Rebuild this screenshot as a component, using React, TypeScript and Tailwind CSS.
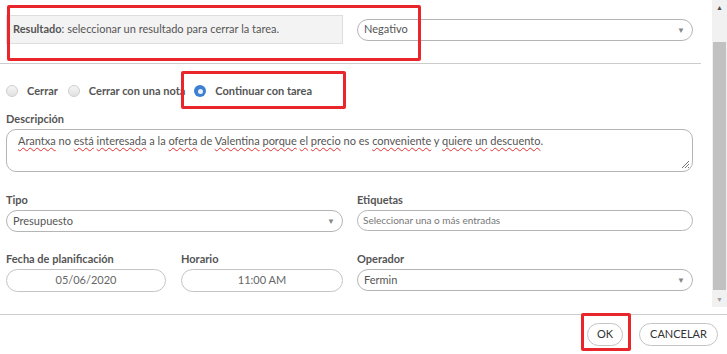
import React from 'react';

const Chevron = () => (
  <span className="absolute right-[7px] top-1/2 -translate-y-1/2 text-[8px] leading-none text-[#888]">▼</span>
);

const Radio = ({ checked = false }: { checked?: boolean }) =>
  checked ? (
    <span className="w-[12px] h-[12px] rounded-full bg-[#3d7fd1] flex items-center justify-center shrink-0">
      <span className="w-[5px] h-[5px] rounded-full bg-[#e8f0fb]" />
    </span>
  ) : (
    <span className="w-[12px] h-[12px] rounded-full border border-[#cfcfcf] bg-gradient-to-b from-[#f5f5f5] to-[#e2e2e2] shrink-0" />
  );

const Label = ({ children }: { children: React.ReactNode }) => (
  <div className="text-[11px] leading-[14px] font-bold text-[#555] mb-[3px]">{children}</div>
);

const Sp = ({ children }: { children: React.ReactNode }) => (
  <span className="underline decoration-wavy decoration-[#e03030] decoration-[1px] underline-offset-[2px]">{children}</span>
);

const SelectBox = ({ value, className = '' }: { value: string; className?: string }) => (
  <div className={`relative h-[22px] rounded-full border border-[#b5b5b5] flex items-center pl-[6px] text-[11px] text-[#555] ${className}`}>
    {value}
    <Chevron />
  </div>
);

export default function App() {
  return (
    <div className="w-[727px] h-[354px] bg-white relative overflow-hidden font-['Lato',sans-serif] text-[#555]">
      <div className="flex h-[307px]">
        <div className="w-[701px]">
          {/* result row */}
          <div className="flex items-center gap-[14px] px-[6px] pt-[15px] pb-[19px] border-b border-[#cccccc]">
            <div className="w-[337px] h-[29px] bg-[#f3f3f3] border border-[#dedede] flex items-center px-[6px] text-[11px]">
              <span className="font-bold">Resultado</span>: seleccionar un resultado para cerrar la tarea.
            </div>
            <SelectBox value="Negativo" className="w-[336px]" />
          </div>

          {/* radios */}
          <div className="flex items-center px-[6px] mt-[19px] h-[16px] text-[11px] font-bold text-[#555]">
            <Radio />
            <span className="ml-[9px] mr-[10px]">Cerrar</span>
            <Radio />
            <span className="ml-[9px] mr-[9px]">Cerrar con una nota</span>
            <Radio checked />
            <span className="ml-[9px]">Continuar con tarea</span>
          </div>

          <div className="px-[6px] mt-[13px] w-[701px] pr-[8px]">
            <Label>Descripción</Label>
            <div className="relative h-[43px] rounded-[10px] border border-[#b5b5b5] px-[11px] pt-[3px] text-[11px] leading-[16px] text-[#555]">
              <Sp>Arantxa</Sp> no <Sp>está</Sp> <Sp>interesada</Sp> a la <Sp>oferta</Sp> de <Sp>Valentina</Sp> <Sp>porque</Sp> <Sp>el</Sp>{' '}
              <Sp>precio</Sp> no es <Sp>conveniente</Sp> y <Sp>quiere</Sp> <Sp>un</Sp> <Sp>descuento</Sp>.
              <svg className="absolute right-[2px] bottom-[2px]" width="9" height="9" viewBox="0 0 9 9">
                <path d="M8 1L1 8M8 4L4 8M8 7L7 8" stroke="#777" strokeWidth="1" />
              </svg>
            </div>

            <div className="grid grid-cols-[337px_336px] gap-x-[14px] mt-[21px]">
              <div>
                <Label>Tipo</Label>
                <SelectBox value="Presupuesto" className="h-[21px]" />
              </div>
              <div>
                <Label>Etiquetas</Label>
                <div className="h-[21px] rounded-full border border-[#b5b5b5] flex items-center pl-[5px] text-[10px] text-[#777]">
                  Seleccionar una o más entradas
                </div>
              </div>
            </div>

            <div className="grid grid-cols-[337px_336px] gap-x-[14px] mt-[20px]">
              <div className="grid grid-cols-[160px_162px] gap-x-[15px]">
                <div>
                  <Label>Fecha de planificación</Label>
                  <div className="h-[23px] rounded-full border border-[#c4c4c4] flex items-center justify-center text-[11px] text-[#666]">
                    05/06/2020
                  </div>
                </div>
                <div>
                  <Label>Horario</Label>
                  <div className="h-[23px] rounded-full border border-[#c4c4c4] flex items-center justify-center text-[11px] text-[#666]">
                    11:00 AM
                  </div>
                </div>
              </div>
              <div>
                <Label>Operador</Label>
                <SelectBox value="Fermin" className="h-[22px]" />
              </div>
            </div>
          </div>
        </div>

        {/* scrollbar */}
        <div className="ml-[11px] w-[15px] bg-[#f1f1f1] flex flex-col items-center">
          <div className="h-[15px] flex items-center justify-center text-[7px] text-[#505050]">▲</div>
          <div className="flex-1 w-full flex flex-col pt-[27px] pb-[2px]">
            <div className="flex-1 bg-[#c1c1c1] mx-[1px]" />
          </div>
          <div className="h-[15px] flex items-center justify-center text-[7px] text-[#a3a3a3]">▼</div>
        </div>
      </div>

      {/* footer */}
      <div className="mt-[7px] border-t border-[#cccccc] flex justify-end items-center gap-[16px] pr-[9px] pt-[8px]">
        <button className="w-[36px] h-[23px] rounded-full border border-[#c4c4c4] text-[11px] text-[#333] bg-white">OK</button>
        <button className="w-[79px] h-[23px] rounded-full border border-[#c4c4c4] text-[11px] text-[#333] bg-white">CANCELAR</button>
      </div>

      {/* annotation boxes */}
      <div className="absolute left-[7px] top-[5px] w-[414px] h-[56px] border-[3px] border-[#e8262b] rounded-[2px] pointer-events-none" />
      <div className="absolute left-[181px] top-[71px] w-[165px] h-[38px] border-[3px] border-[#e8262b] rounded-[2px] pointer-events-none" />
      <div className="absolute left-[581px] top-[313px] w-[50px] h-[38px] border-[3px] border-[#e8262b] rounded-[2px] pointer-events-none" />
    </div>
  );
}
